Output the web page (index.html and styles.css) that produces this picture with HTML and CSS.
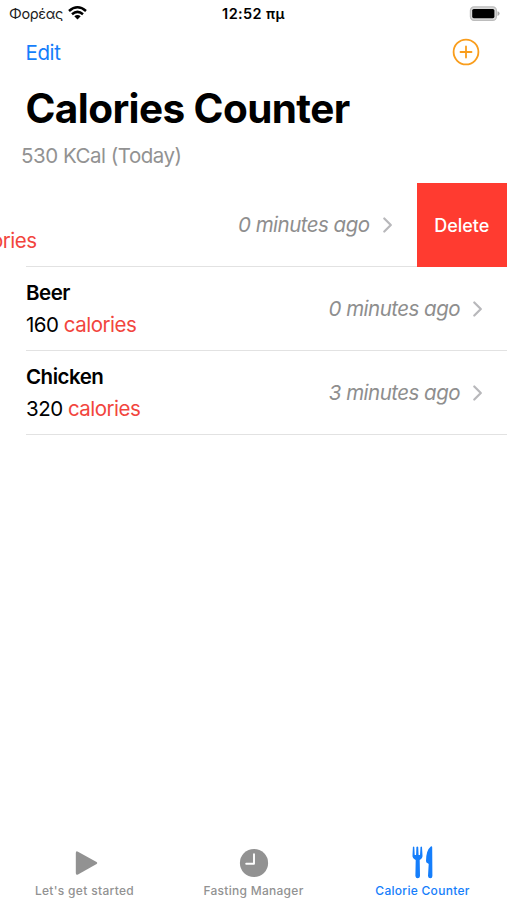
FILE: index.html
```
<!DOCTYPE html>
<html lang="en">
<head>
<meta charset="utf-8">
<meta name="viewport" content="width=device-width">
<title>Calories Counter</title>
<link rel="stylesheet" href="styles.css">
</head>
<body>
<div class="app">
  <header class="status">
    <div class="carrier"><span class="carrier-name">Φορέας</span>
      <svg class="wifi" width="19" height="14" viewBox="0 0 19 14" fill="none" stroke="#000" stroke-width="2.5"><path d="M1 5Q9.5-2.4 18 5"/><path d="M4 8.2Q9.5 3.5 15 8.2"/><path d="M9.5 13.4L6.3 10.2Q9.5 7.6 12.7 10.2Z" fill="#000" stroke="none"/></svg>
    </div>
    <time class="clock">12:52 πμ</time>
    <svg class="battery" width="32" height="16" viewBox="0 0 32 16"><rect x="1.4" y=".9" width="26" height="13.4" rx="3.6" fill="#d8d8d8" stroke="#bcbcbc" stroke-width="1.2"/><rect x="3.2" y="3" width="22.2" height="9.2" rx="1.6" fill="#000"/><path d="M28.5 5.2Q30.6 5.7 30.6 7.6T28.5 10Z" fill="#aaa"/></svg>
  </header>
  <nav class="toolbar">
    <a class="edit">Edit</a>
    <svg class="add" width="28" height="28" viewBox="0 0 28 28" fill="none" stroke="#f99d1c" stroke-width="1.8" stroke-linecap="round"><circle cx="14" cy="14" r="12.4"/><path d="M14 8.5v11M8.5 14h11"/></svg>
  </nav>
  <h1 class="title">Calories Counter</h1>
  <p class="total">530 KCal (Today)</p>
  <ul class="list">
    <li class="row swiped">
      <div class="food"><span class="amount"><span class="unit">calories</span></span></div>
      <span class="ago">0 minutes ago</span>
      <svg class="chevron" width="10" height="16" viewBox="0 0 10 16"><path d="M1.3 1.5L7.8 8L1.3 14.5"/></svg>
      <button class="delete">Delete</button>
    </li>
    <li class="row">
      <div class="food"><strong class="name">Beer</strong><span class="amount">160 <span class="unit">calories</span></span></div>
      <span class="ago">0 minutes ago</span>
      <svg class="chevron" width="10" height="16" viewBox="0 0 10 16"><path d="M1.3 1.5L7.8 8L1.3 14.5"/></svg>
    </li>
    <li class="row">
      <div class="food"><strong class="name">Chicken</strong><span class="amount">320 <span class="unit">calories</span></span></div>
      <span class="ago">3 minutes ago</span>
      <svg class="chevron" width="10" height="16" viewBox="0 0 10 16"><path d="M1.3 1.5L7.8 8L1.3 14.5"/></svg>
    </li>
  </ul>
  <footer class="tabs">
    <a class="tab">
      <svg width="36" height="36" viewBox="0 0 36 36" fill="currentColor"><path d="M8.8 8Q8.8 5.5 11 6.7L29.6 17.1Q31 18 29.6 18.9L11 29.4Q8.8 30.6 8.8 28.1Z"/></svg>
      <span class="tab-label start">Let's get started</span>
    </a>
    <a class="tab">
      <svg width="36" height="36" viewBox="0 0 36 36"><circle cx="18" cy="18" r="14.1" fill="currentColor"/><path d="M18 9.3V18.8H10.2" fill="none" stroke="#fff" stroke-width="1.9" stroke-linecap="round" stroke-linejoin="round"/></svg>
      <span class="tab-label fasting">Fasting Manager</span>
    </a>
    <a class="tab active">
      <svg width="36" height="36" viewBox="0 0 36 36" fill="currentColor"><path d="M7.9 2Q8.6.9 9.3 2L9.7 10H11.1L11.4 2Q12.4.9 13.2 2L13.6 10H15L15.5 2Q16.3.9 17 2L17.5 10.5Q17.8 13.3 14.7 15L15 31Q14.8 33.2 12.7 33.2T10.4 31L10.7 15Q7.2 13.3 7.5 10.5Z"/><path d="M27.2 2.3Q27.2.9 25.8 1.4Q21 5.2 21 16Q21 18 22.7 18.3L23.7 19L23 31Q23.2 33.2 25.3 33.2T27.4 31Z"/></svg>
      <span class="tab-label counter">Calorie Counter</span>
    </a>
  </footer>
</div>
</body>
</html>
```
FILE: styles.css
```
* { box-sizing: border-box; }
body { margin: 0; background: #fff; color: #000; font-family: Inter, "Liberation Sans", sans-serif; }
.app { width: 507px; height: 900px; display: flex; flex-direction: column; overflow: hidden; }
.status { height: 28px; flex: none; display: grid; grid-template-columns: 1fr auto 1fr; align-items: center; padding: 0 6px 0 9px; }
.carrier { display: flex; align-items: center; gap: 5px; }
.carrier-name { font-size: 14.5px; line-height: 28px; color: #222; letter-spacing: -.35px; }
.wifi { margin-top: -2px; }
.clock { font-size: 14.5px; line-height: 28px; font-weight: 600; letter-spacing: .4px; margin: 0 3px 0 0; }
.battery { justify-self: end; margin-top: -1px; }
.toolbar { height: 50px; flex: none; display: flex; align-items: center; justify-content: space-between; padding: 0 27px 0 26px; }
.edit { font-size: 20.5px; color: #157efb; letter-spacing: -.4px; margin: -2px 0 0 -.5px; }
.add { margin-top: -2px; }
.title { margin: 6px 0 0 25.5px; font-size: 40.5px; line-height: 50px; font-weight: 700; letter-spacing: -.6px; white-space: nowrap; }
.total { margin: 7px 0 0 21px; font-size: 20.5px; line-height: 30px; color: #929292; letter-spacing: -.48px; }
.list { list-style: none; margin: 12px 0 0; padding: 0; }
.row { height: 84px; display: flex; align-items: center; margin-left: 26px; padding-right: 24px; border-bottom: 1px solid #e2e2e2; }
.food { display: flex; flex-direction: column; flex: 1; font-size: 20.5px; line-height: 32px; letter-spacing: -.5px; }
.name { font-weight: 600; }
.unit { color: #f2453d; }
.ago { font-size: 20.5px; line-height: 32px; font-style: italic; color: #8e8e8e; letter-spacing: -.52px; padding-top: 1px; }
.chevron { margin-left: 13px; fill: none; stroke: #b8b8bb; stroke-width: 2.2; stroke-linecap: round; stroke-linejoin: round; }
.swiped { padding-right: 0; }
.swiped .food { padding-top: 32px; margin-left: -62px; }
.delete { align-self: stretch; width: 90.5px; margin: 0 0 -1px 24px; padding: 0; border: 0; background: #ff3b30; color: #fff; font: 500 18px Inter, sans-serif; }
.tabs { display: grid; grid-template-columns: repeat(3, 1fr); margin-top: auto; height: 55px; color: #929292; }
.tab { display: flex; flex-direction: column; align-items: center; }
.tab-label { font-size: 12px; line-height: 18px; font-weight: 500; margin-top: 1px; white-space: nowrap; }
.start { letter-spacing: .32px; }
.fasting { letter-spacing: .28px; }
.counter { letter-spacing: .28px; }
.active { color: #157efb; }
```
